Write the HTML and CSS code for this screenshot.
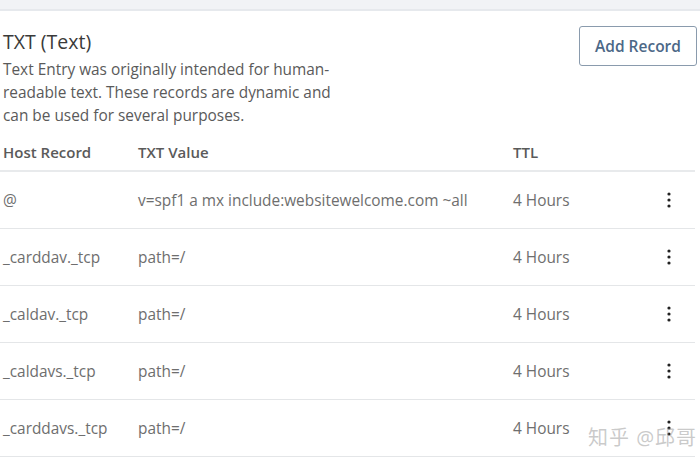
FILE: index.html
```html
<!DOCTYPE html>
<html>
<head>
  <title>TXT Records</title>
  <link rel="stylesheet" href="styles.css">
</head>
<body>
  <div class="topband"></div>
  <div class="card">
    <div class="card-head">
      <div class="intro">
        <h2 class="title">TXT (Text)</h2>
        <p class="desc">Text Entry was originally intended for human-<br>readable text. These records are dynamic and<br>can be used for several purposes.</p>
      </div>
      <button class="add-btn">Add Record</button>
    </div>

    <div class="records">
      <div class="row head">
        <span>Host Record</span>
        <span>TXT Value</span>
        <span>TTL</span>
        <span></span>
      </div>
      <div class="row">
        <span>@</span>
        <span>v=spf1 a mx include:websitewelcome.com ~all</span>
        <span>4 Hours</span>
        <span class="more"><svg width="4" height="16" viewBox="0 0 4 16"><circle cx="2" cy="2" r="1.6"/><circle cx="2" cy="8" r="1.6"/><circle cx="2" cy="14" r="1.6"/></svg></span>
      </div>
      <div class="row">
        <span>_carddav._tcp</span>
        <span>path=/</span>
        <span>4 Hours</span>
        <span class="more"><svg width="4" height="16" viewBox="0 0 4 16"><circle cx="2" cy="2" r="1.6"/><circle cx="2" cy="8" r="1.6"/><circle cx="2" cy="14" r="1.6"/></svg></span>
      </div>
      <div class="row">
        <span>_caldav._tcp</span>
        <span>path=/</span>
        <span>4 Hours</span>
        <span class="more"><svg width="4" height="16" viewBox="0 0 4 16"><circle cx="2" cy="2" r="1.6"/><circle cx="2" cy="8" r="1.6"/><circle cx="2" cy="14" r="1.6"/></svg></span>
      </div>
      <div class="row">
        <span>_caldavs._tcp</span>
        <span>path=/</span>
        <span>4 Hours</span>
        <span class="more"><svg width="4" height="16" viewBox="0 0 4 16"><circle cx="2" cy="2" r="1.6"/><circle cx="2" cy="8" r="1.6"/><circle cx="2" cy="14" r="1.6"/></svg></span>
      </div>
      <div class="row">
        <span>_carddavs._tcp</span>
        <span>path=/</span>
        <span>4 Hours</span>
        <span class="more"><svg width="4" height="16" viewBox="0 0 4 16"><circle cx="2" cy="2" r="1.6"/><circle cx="2" cy="8" r="1.6"/><circle cx="2" cy="14" r="1.6"/></svg></span>
      </div>
    </div>
  </div>
  <div class="watermark">知乎 @邱哥</div>
</body>
</html>
```

FILE: styles.css
```css
body{
  margin: 0;
  height: 470px;
  overflow: hidden;
  position: relative;
  background: #fff;
  font-family: "Open Sans", "Noto Sans CJK SC", sans-serif;
  color: #555;
}
.topband{
  height: 9px;
  background: #f1f3f6;
  border-bottom: 2px solid #e6e9ed;
}
.card{
  padding: 15px 3px 0 3px;
}
.card-head{
  display: flex;
  justify-content: space-between;
  align-items: flex-start;
}
.title{
  margin: 3px 0 0 0;
  font-size: 19.5px;
  font-weight: 400;
  line-height: 26px;
  color: #3a3a3a;
}
.desc{
  margin: 4px 0 0 0;
  font-size: 15.4px;
  line-height: 22.8px;
  color: #5a5a5a;
}
.add-btn{
  width: 118px;
  height: 40px;
  background: #fff;
  border: 1px solid #8a9bad;
  border-radius: 3px;
  font-family: "Open Sans", sans-serif;
  font-size: 15.5px;
  font-weight: 600;
  color: #4c6887;
  padding: 0;
}
.records{
  margin-top: 6px;
  margin-left: -3px;
  width: 695px;
}
.row{
  display: grid;
  grid-template-columns: 135px 375px 154px 1fr;
  align-items: center;
  height: 56px;
  padding-left: 3px;
  border-bottom: 1px solid #e4e6e8;
  font-size: 15.4px;
  color: #6e6e6e;
}
.row.head{
  height: 37px;
  font-size: 15px;
  font-weight: 600;
  color: #5a5a5a;
  border-bottom: 2px solid #e8eaec;
}
.more{
  display: flex;
}
.more svg{
  fill: #222;
}
.watermark{
  position: absolute;
  left: 588px;
  top: 422px;
  font-size: 20px;
  color: rgba(150,150,150,0.5);
  white-space: nowrap;
  letter-spacing: 1px;
}
```
